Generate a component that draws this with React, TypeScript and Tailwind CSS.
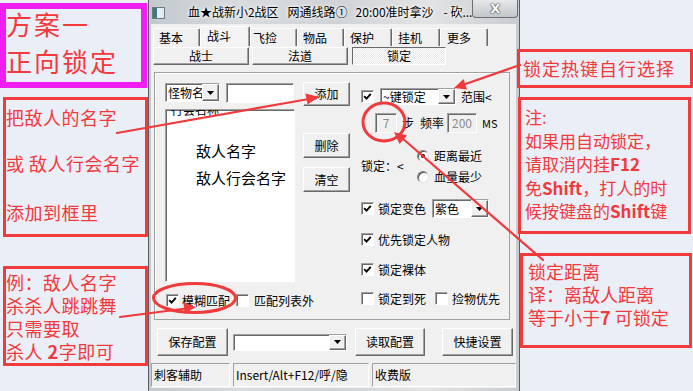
import React from "react";

const raised =
  "bg-[#f0f0f0] border border-t-white border-l-white border-r-[#696969] border-b-[#696969] shadow-[inset_-1px_-1px_0_#a0a0a0]";
const sunken =
  "border border-t-[#a0a0a0] border-l-[#a0a0a0] border-r-white border-b-white shadow-[inset_1px_1px_0_#696969]";
const pane = "border border-t-[#a0a0a0] border-l-[#a0a0a0] border-r-white border-b-white";

function DownArrow() {
  return (
    <svg width="7" height="4" viewBox="0 0 7 4">
      <path d="M0 0h7L3.5 4z" fill="#000" />
    </svg>
  );
}

function Combo({ text, cls }: { text: string; cls: string }) {
  return (
    <div className={`${sunken} bg-white flex ${cls}`}>
      <div className="flex-1 min-w-0 overflow-hidden whitespace-nowrap pl-[2px] text-[12px] leading-[15px] self-center">
        {text}
      </div>
      <div className={`${raised} w-[17px] shrink-0 flex items-center justify-center`}>
        <DownArrow />
      </div>
    </div>
  );
}

function Btn({ children, cls }: { children: React.ReactNode; cls: string }) {
  return <div className={`${raised} flex items-center justify-center text-[12px] ${cls}`}>{children}</div>;
}

function Check({ on }: { on?: boolean }) {
  return (
    <span className={`${sunken} bg-white w-[13px] h-[13px] shrink-0 flex items-center justify-center`}>
      {on && (
        <svg width="9" height="9" viewBox="0 0 9 9">
          <path d="M1.2 4.2 L3.5 6.6 L7.8 1.8" stroke="#000" strokeWidth="1.9" fill="none" />
        </svg>
      )}
    </span>
  );
}

function Radio({ on }: { on?: boolean }) {
  return (
    <span className="w-[12px] h-[12px] rounded-full bg-white border border-t-[#808080] border-l-[#808080] border-r-[#e4e4e4] border-b-[#e4e4e4] shadow-[inset_1px_1px_0_#505050] flex items-center justify-center shrink-0">
      {on && <span className="w-[4px] h-[4px] rounded-full bg-black" />}
    </span>
  );
}

function Tab({ label, cls, sel }: { label: string; cls: string; sel?: boolean }) {
  return (
    <div
      className={`${cls} ${
        sel ? "h-[20px] bg-[#f4f4f4]" : "h-[18px] bg-[#f0f0f0]"
      } border border-b-0 border-t-white border-l-white border-r-[#696969] shadow-[inset_-1px_0_0_#a0a0a0] rounded-t-[2px] text-[12px] leading-[16px] whitespace-nowrap`}
    >
      {label}
    </div>
  );
}

function Window() {
  return (
    <div className="w-[372px] shrink-0 h-full flex flex-col border-l border-r border-[#5a5e63] bg-[linear-gradient(90deg,#c3c9ce_0%,#d9dcdf_25%,#cfd3d6_50%,#e2e3e4_75%,#c9cccf_100%)] text-black">
      {/* title bar */}
      <div className="h-[24px] flex items-start shrink-0">
        <div className="mt-[7px] ml-[3px] w-[13px] h-[12px] border border-[#6b7b80] bg-[linear-gradient(90deg,#3d7a84_0%,#3d7a84_35%,#eef3f6_35%,#dfe8ee_100%)]" />
        <div className="ml-[23px] mt-[5px] w-[285px] flex text-[12px] leading-[14px] whitespace-nowrap [text-shadow:0_0_4px_#fff,0_0_3px_#fff]">
          <span>血★战新小2战区</span>
          <span className="ml-[9px]">网通线路①</span>
          <span className="ml-[8px]">20:00准时拿沙</span>
          <span className="ml-[10px]">- 砍...</span>
        </div>
        <div className="ml-auto mr-[1px] w-[46px] h-[18px] rounded-b-[4px] border border-t-0 border-[#6a6e73] bg-[linear-gradient(#e6e8ea,#c2c6ca)] text-white font-bold text-[13px] leading-[16px] flex items-center justify-center font-['DejaVu_Sans',sans-serif] [text-shadow:0_0_2px_#222,0_0_1px_#222]">
          X
        </div>
      </div>
      {/* client */}
      <div className="ml-[2px] w-[365px] h-[364px] bg-[#f0f0f0] flex flex-col">
        <div className="mt-[2px] h-[20px] flex items-end pl-[2px]">
          <Tab label="基本" cls="w-[47px] pl-[5px] pt-[1px]" />
          <Tab label="战斗" cls="w-[50px] pl-[6px] pt-[1px]" sel />
          <Tab label="飞捡" cls="w-[47px] pl-[2px] pt-[1px]" />
          <Tab label="物品" cls="w-[47px] pl-[5px] pt-[1px]" />
          <Tab label="保护" cls="w-[48px] pl-[5px] pt-[1px]" />
          <Tab label="挂机" cls="w-[48px] pl-[5px] pt-[1px]" />
          <Tab label="更多" cls="w-[48px] pl-[6px] pt-[1px]" />
        </div>
        <div className="mt-[1px] h-[18px] flex">
          <Btn cls="ml-[2px] w-[96px] h-[18px]">战士</Btn>
          <Btn cls="ml-[3px] w-[96px] h-[18px]">法道</Btn>
          <div className="ml-[4px] w-[94px] h-[18px] flex items-center justify-center text-[12px] border border-t-[#696969] border-l-[#696969] border-r-white border-b-white bg-[repeating-conic-gradient(#ffffff_0%_25%,#e6e6e6_0%_50%)] bg-[length:2px_2px]">
            锁定
          </div>
        </div>
        {/* panel */}
        <div className="mt-[7px] ml-[3px] w-[356px] h-[248px] border border-[#a0a0a0] shadow-[inset_1px_1px_0_#fff] flex items-start text-[12px]">
          {/* left section */}
          <div className="ml-[10px] mt-[9px] w-[186px] flex flex-col">
            <div className="flex items-start h-[24px]">
              <Combo text="怪物名称" cls="w-[55px] h-[19px] mt-[1px]" />
              <div className={`${sunken} bg-white w-[68px] h-[20px] mt-[1px] ml-[6px]`} />
              <Btn cls="w-[47px] h-[24px] ml-[9px]">添加</Btn>
            </div>
            <div className="flex mt-[3px]">
              <div className={`${sunken} bg-white w-[130px] h-[173px] flex flex-col`}>
                <div className="h-[8px] overflow-hidden ml-[5px] text-[12px] leading-[14px]">
                  <div className="-mt-[7px] whitespace-nowrap">行会名称</div>
                </div>
                <div className="pl-[30px] mt-[19px] text-[15px] leading-[27px]">
                  <div>敌人名字</div>
                  <div>敌人行会名字</div>
                </div>
              </div>
              <div className="ml-[8px] flex flex-col">
                <Btn cls="w-[47px] h-[25px] mt-[24px]">删除</Btn>
                <Btn cls="w-[47px] h-[25px] mt-[9px]">清空</Btn>
              </div>
            </div>
            <div className="flex items-center mt-[12px] h-[13px]">
              <span className="ml-[1px]">
                <Check on />
              </span>
              <span className="ml-[3px]">模糊匹配</span>
              <span className="ml-[6px]">
                <Check />
              </span>
              <span className="ml-[5px]">匹配列表外</span>
            </div>
          </div>
          {/* right section */}
          <div className="ml-[10px] mt-[15px] flex flex-col">
            <div className="flex items-center h-[17px]">
              <Check on />
              <Combo text="~键锁定" cls="ml-[6px] w-[76px] h-[17px]" />
              <span className="ml-[5px]">范围&lt;</span>
            </div>
            <div className="flex items-center h-[20px] mt-[8px]">
              <div className={`${sunken} ml-[14px] w-[22px] h-[20px] bg-[#f0f0f0] text-[#8a8a8a] flex items-center justify-center`}>
                7
              </div>
              <span className="ml-[5px]">步</span>
              <span className="ml-[6px]">频率</span>
              <div className={`${sunken} ml-[3px] w-[30px] h-[20px] bg-[#f0f0f0] text-[#8a8a8a] flex items-center justify-center`}>
                200
              </div>
              <span className="ml-[5px] text-[11px]">MS</span>
            </div>
            <div className="flex items-center mt-[12px] h-[42px]">
              <span className="w-[56px]">锁定：&lt;</span>
              <div className="flex flex-col">
                <div className="flex items-center h-[21px]">
                  <Radio on />
                  <span className="ml-[5px]">距离最近</span>
                </div>
                <div className="flex items-center h-[21px]">
                  <Radio />
                  <span className="ml-[5px]">血量最少</span>
                </div>
              </div>
            </div>
            <div className="flex items-center mt-[12px] h-[19px]">
              <Check on />
              <span className="ml-[4px]">锁定变色</span>
              <Combo text="紫色" cls="ml-[6px] w-[57px] h-[19px]" />
            </div>
            <div className="flex items-center mt-[15px] h-[13px]">
              <Check on />
              <span className="ml-[4px]">优先锁定人物</span>
            </div>
            <div className="flex items-center mt-[17px] h-[13px]">
              <Check on />
              <span className="ml-[4px]">锁定裸体</span>
            </div>
            <div className="flex items-center mt-[16px] h-[13px]">
              <Check />
              <span className="ml-[4px]">锁定到死</span>
              <span className="ml-[9px]">
                <Check />
              </span>
              <span className="ml-[4px]">捡物优先</span>
            </div>
          </div>
        </div>
        {/* bottom buttons */}
        <div className="flex items-center mt-[8px] h-[28px]">
          <Btn cls="ml-[6px] w-[71px] h-[28px]">保存配置</Btn>
          <Combo text="" cls="ml-[5px] w-[114px] h-[17px]" />
          <Btn cls="ml-[8px] w-[70px] h-[28px]">读取配置</Btn>
          <Btn cls="ml-[17px] w-[71px] h-[28px]">快捷设置</Btn>
        </div>
        {/* status bar */}
        <div className="flex mt-[7px] h-[24px] text-[12px] leading-[22px] whitespace-nowrap">
          <div className={`${pane} w-[79px] pl-[2px]`}>刺客辅助</div>
          <div className={`${pane} ml-[3px] w-[136px] pl-[2px] overflow-hidden`}>Insert/Alt+F12/呼/隐</div>
          <div className={`${pane} ml-[3px] flex-1 pl-[2px]`}>收费版</div>
        </div>
      </div>
    </div>
  );
}

export default function App() {
  const red = "#f03a3c";
  return (
    <div className="relative w-[693px] h-[391px] overflow-hidden bg-[#eaeef6] flex font-['Noto_Sans_CJK_SC',sans-serif]">
      {/* left annotations */}
      <div className="w-[148px] shrink-0 flex flex-col text-[#f2393c]">
        <div className="mt-[3px] w-[147px] h-[85px] border-[6px] border-[#f01ef0] text-[26px] leading-[37px] tracking-[2px] whitespace-nowrap">
          <div className="-mt-[4px]">方案一</div>
          <div>正向锁定</div>
        </div>
        <div className="mt-[9px] ml-[3px] w-[145px] h-[140px] border-[3px] border-[#f03a3c] text-[18px] leading-[24px] tracking-[0.5px] whitespace-nowrap">
          <div className="mt-[5px]">把敌人的名字</div>
          <div className="mt-[22px]">或 敌人行会名字</div>
          <div className="mt-[25px]">添加到框里</div>
        </div>
        <div className="mt-[29px] ml-[3px] w-[145px] h-[100px] border-[3px] border-[#f03a3c] text-[18px] leading-[23px] tracking-[0.5px] whitespace-nowrap pt-[2px]">
          <div>例：敌人名字</div>
          <div>杀杀人跳跳舞</div>
          <div>只需要取</div>
          <div>
            杀人 <b>2</b>字即可
          </div>
        </div>
      </div>

      <Window />

      {/* right annotations */}
      <div className="flex-1 flex flex-col text-[#f2393c] whitespace-nowrap">
        <div className="mt-[49px] -ml-[3px] w-[176px] h-[39px] border-[3px] border-[#f03a3c] text-[18px] leading-[33px] pl-[3px] tracking-[1px]">
          锁定热键自行选择
        </div>
        <div className="mt-[9px] -ml-[2px] w-[173px] h-[137px] border-[3px] border-[#f03a3c] text-[17px] leading-[23.5px] pl-[4px] pt-[5px]">
          <div>注:</div>
          <div>如果用自动锁定，</div>
          <div>
            请取消内挂<b>F12</b>
          </div>
          <div>
            免<b>Shift</b>，打人的时
          </div>
          <div>
            候按键盘的<b>Shift</b>键
          </div>
        </div>
        <div className="mt-[19px] w-[172px] h-[95px] border-[3px] border-[#f03a3c] text-[18px] leading-[23px] pl-[5px] pt-[4px]">
          <div>锁定距离</div>
          <div>译：离敌人距离</div>
          <div>
            等于小于<b>7</b> 可锁定
          </div>
        </div>
      </div>

      {/* arrows & circles overlay */}
      <svg className="absolute inset-0 pointer-events-none" width="693" height="391" viewBox="0 0 693 391">
        <g stroke={red} strokeWidth="2.2" fill="none" strokeLinecap="round">
          <line x1="117" y1="133" x2="309" y2="99" />
          <line x1="520" y1="65" x2="464" y2="84.5" />
          <line x1="543" y1="260" x2="402" y2="138" />
          <line x1="120" y1="317" x2="186" y2="308.5" />
          <ellipse cx="384" cy="122" rx="21" ry="19" strokeWidth="3" />
          <ellipse cx="194.5" cy="298" rx="41" ry="14.5" strokeWidth="3" />
        </g>
        <g fill={red}>
          <polygon points="319,97 307.5,104.5 305.5,93.5" />
          <polygon points="454,88 467,89.5 463.5,79" />
          <polygon points="394,132 399.5,144 407,135.5" />
          <polygon points="196,307 184.8,313.5 183.5,302.5" />
        </g>
      </svg>
    </div>
  );
}
